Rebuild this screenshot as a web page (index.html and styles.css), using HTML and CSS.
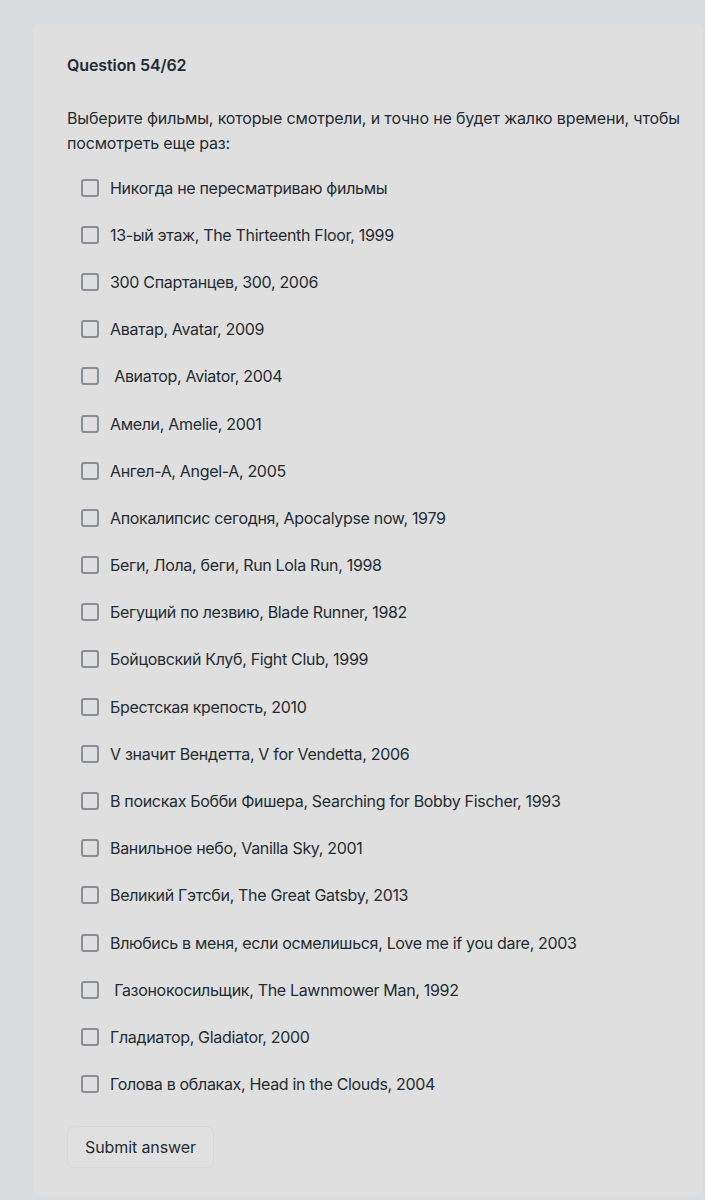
FILE: index.html
```html
<!DOCTYPE html>
<html lang="ru">
<head>
<meta charset="utf-8">
<link rel="stylesheet" href="styles.css">
</head>
<body>
<main class="card">
  <h2 class="title">Question 54/62</h2>
  <p class="question">Выберите фильмы, которые смотрели, и точно не будет жалко времени, чтобы посмотреть еще раз:</p>
  <ul class="options">
    <li class="option"><span class="box"></span><span class="label">Никогда не пересматриваю фильмы</span></li>
    <li class="option"><span class="box"></span><span class="label">13-ый этаж, The Thirteenth Floor, 1999</span></li>
    <li class="option"><span class="box"></span><span class="label">300 Спартанцев, 300, 2006</span></li>
    <li class="option"><span class="box"></span><span class="label">Аватар, Avatar, 2009</span></li>
    <li class="option"><span class="box"></span><span class="label">&nbsp;Авиатор, Aviator, 2004</span></li>
    <li class="option"><span class="box"></span><span class="label">Амели, Amelie, 2001</span></li>
    <li class="option"><span class="box"></span><span class="label">Ангел-А, Angel-A, 2005</span></li>
    <li class="option"><span class="box"></span><span class="label">Апокалипсис сегодня, Apocalypse now, 1979</span></li>
    <li class="option"><span class="box"></span><span class="label">Беги, Лола, беги, Run Lola Run, 1998</span></li>
    <li class="option"><span class="box"></span><span class="label">Бегущий по лезвию, Blade Runner, 1982</span></li>
    <li class="option"><span class="box"></span><span class="label">Бойцовский Клуб, Fight Club, 1999</span></li>
    <li class="option"><span class="box"></span><span class="label">Брестская крепость, 2010</span></li>
    <li class="option"><span class="box"></span><span class="label">V значит Вендетта, V for Vendetta, 2006</span></li>
    <li class="option"><span class="box"></span><span class="label">В поисках Бобби Фишера, Searching for Bobby Fischer, 1993</span></li>
    <li class="option"><span class="box"></span><span class="label">Ванильное небо, Vanilla Sky, 2001</span></li>
    <li class="option"><span class="box"></span><span class="label">Великий Гэтсби, The Great Gatsby, 2013</span></li>
    <li class="option"><span class="box"></span><span class="label">Влюбись в меня, если осмелишься, Love me if you dare, 2003</span></li>
    <li class="option"><span class="box"></span><span class="label">&nbsp;Газонокосильщик, The Lawnmower Man, 1992</span></li>
    <li class="option"><span class="box"></span><span class="label">Гладиатор, Gladiator, 2000</span></li>
    <li class="option"><span class="box"></span><span class="label">Голова в облаках, Head in the Clouds, 2004</span></li>
  </ul>
  <button class="submit" type="button">Submit answer</button>
</main>
</body>
</html>
```

FILE: styles.css
```css
html, body {
  margin: 0;
  padding: 0;
}
body {
  background: #d9dcdf;
  font-family: Inter, "Noto Sans", sans-serif;
  color: #1f2c32;
  padding: 24px 2px 4px 33px;
  height: 1200px;
  box-sizing: border-box;
}
.card {
  background: #dfdfdf;
  border-radius: 6px;
  padding: 30px 20px 28px 34px;
  height: 1172px;
  box-sizing: border-box;
  display: flex;
  flex-direction: column;
  align-items: flex-start;
}
.title {
  margin: 0;
  font-size: 16px;
  font-weight: 600;
  line-height: 22px;
  letter-spacing: -0.1px;
}
.question {
  margin: 30px 0 8px;
  font-size: 16px;
  line-height: 25px;
  letter-spacing: -0.15px;
}
.options {
  list-style: none;
  margin: 0;
  padding: 0 0 0 14px;
  display: flex;
  flex-direction: column;
}
.option {
  height: 47.2px;
  display: flex;
  align-items: center;
  gap: 11px;
  font-size: 16px;
  letter-spacing: -0.32px;
}
.box {
  width: 14px;
  height: 14px;
  border: 2px solid #878e96;
  border-radius: 3px;
  flex: none;
}
.submit {
  margin-top: 18px;
  font-family: inherit;
  font-size: 16px;
  color: #1f2c32;
  background: #e0e0e1;
  border: 1px solid #d8d8d8;
  border-radius: 7px;
  padding: 0 17px;
  height: 42px;
  letter-spacing: -0.1px;
}
```
